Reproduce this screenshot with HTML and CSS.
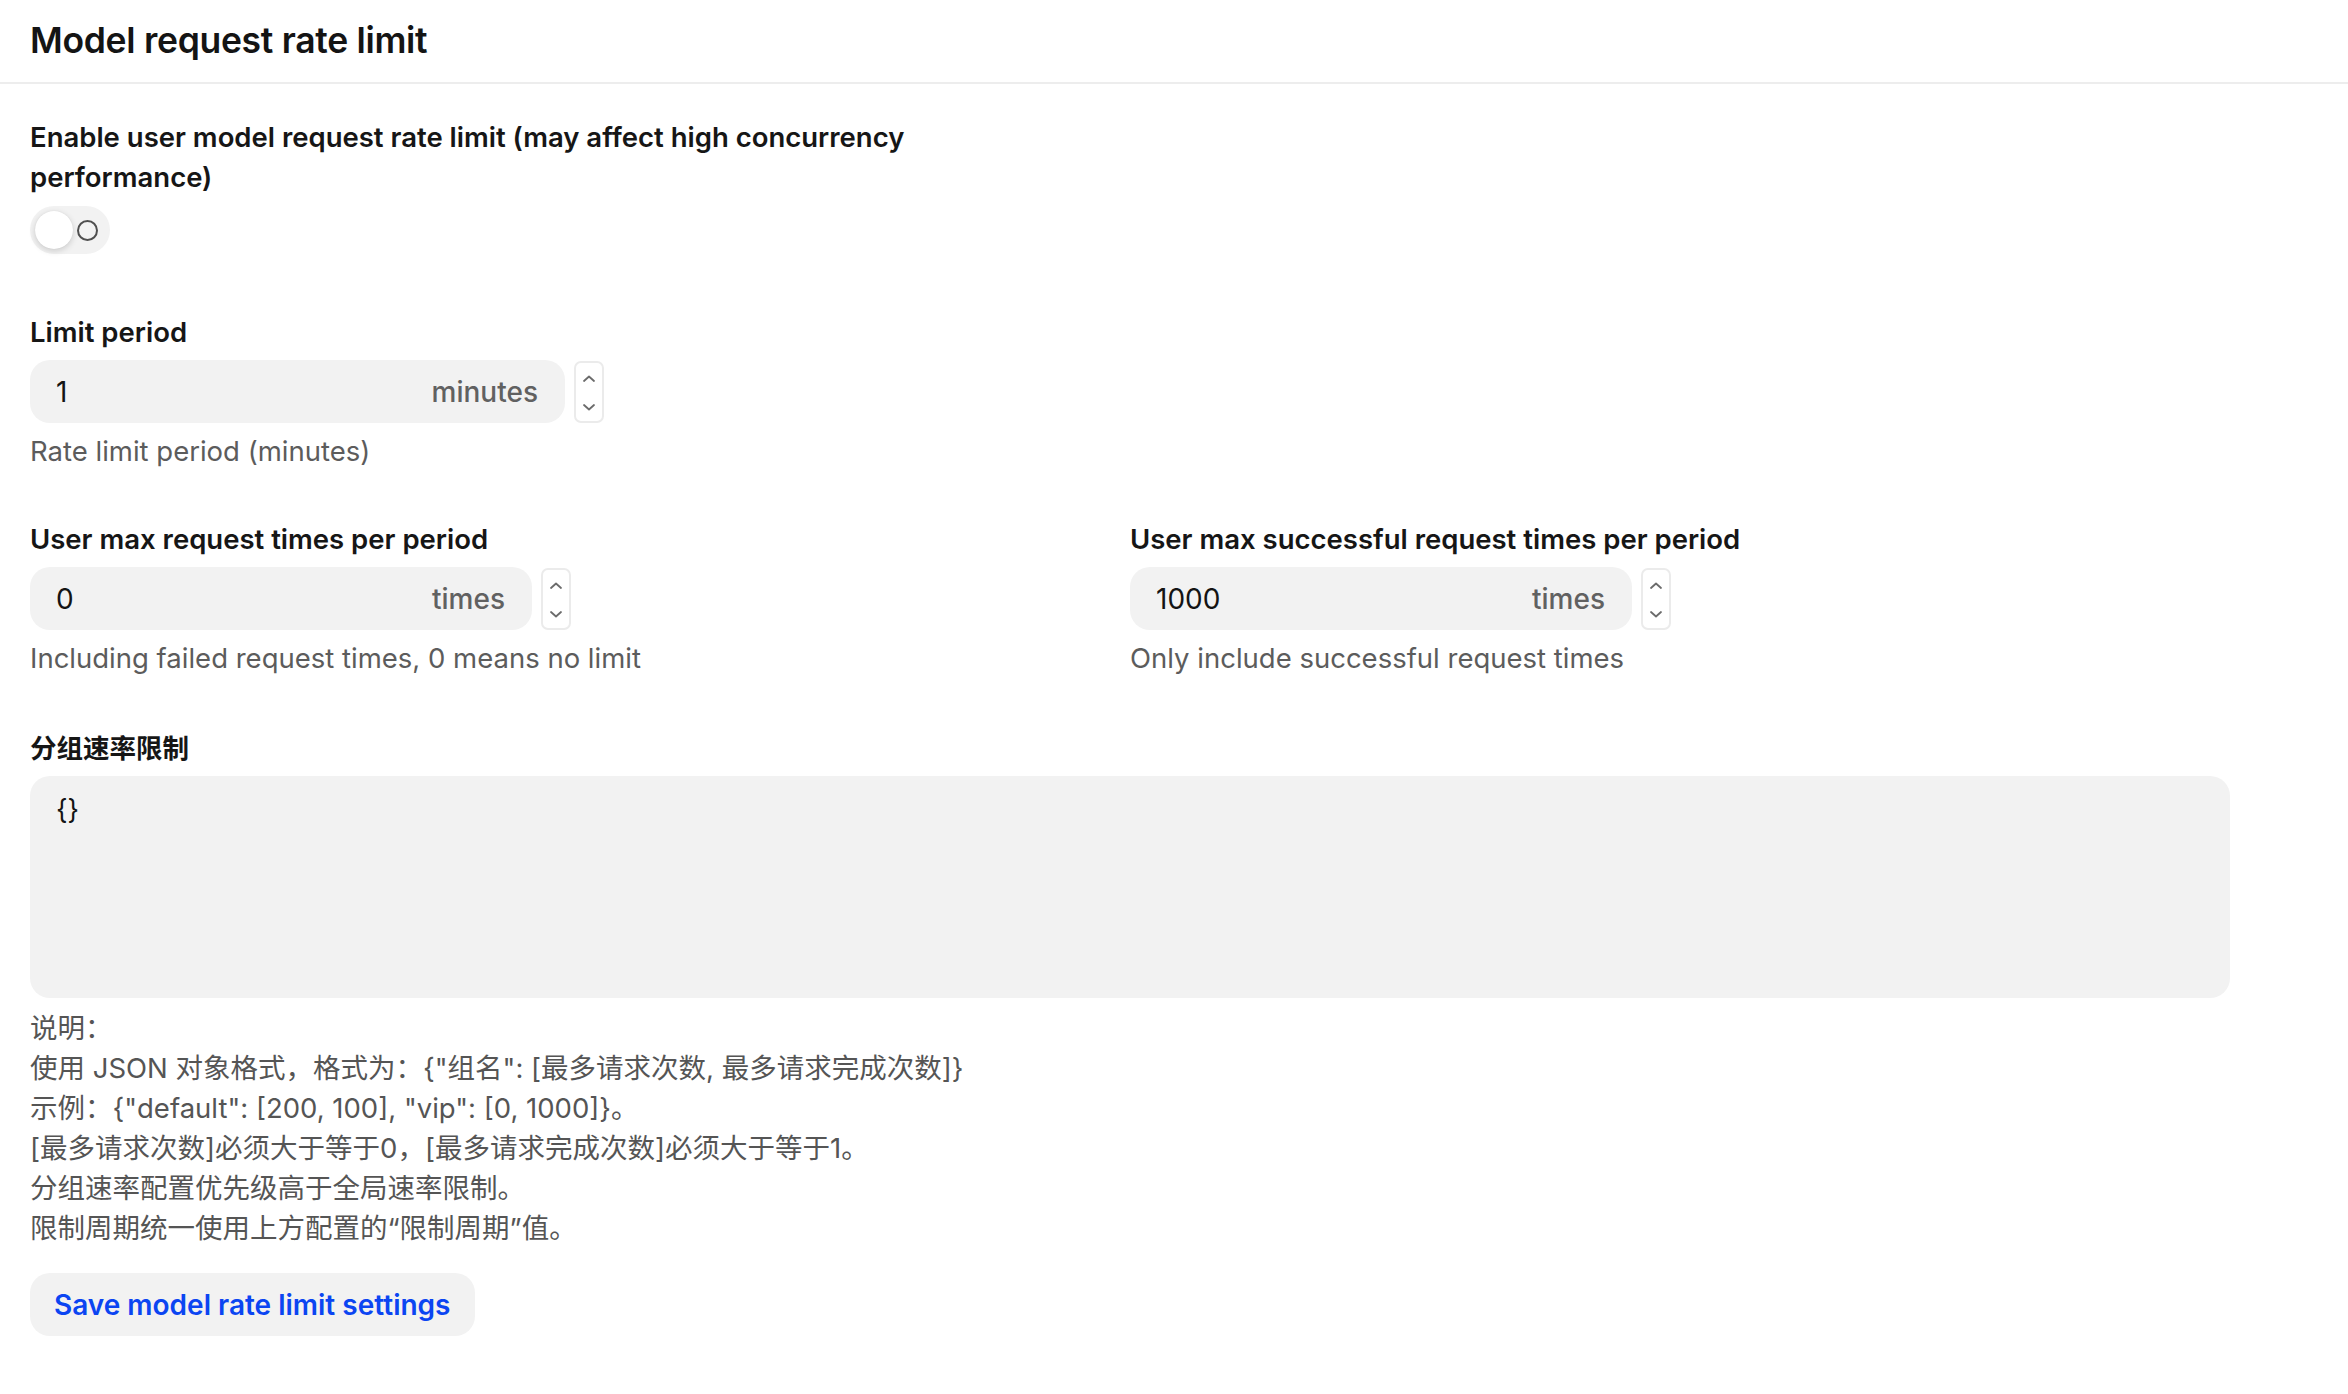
FILE: index.html
```html
<!DOCTYPE html>
<html lang="en">
<head>
<meta charset="utf-8">
<title>Model request rate limit</title>
<link rel="stylesheet" href="styles.css">
</head>
<body>
<header class="section-head">
  <h2 class="section-title">Model request rate limit</h2>
</header>
<main class="content">
  <div class="grid">
    <div class="field field-toggle">
      <label class="label">Enable user model request rate limit (may affect high concurrency performance)</label>
      <div class="switch">
        <span class="knob"></span>
        <span class="off-mark"></span>
      </div>
    </div>
    <div></div>

    <div class="field">
      <label class="label">Limit period</label>
      <div class="number-row">
        <div class="input input-wide"><span class="value">1</span><span class="suffix">minutes</span></div>
        <div class="spinner">
          <svg width="14" height="10" viewBox="0 0 14 10"><path d="M2 7 L7 2.5 L12 7" fill="none" stroke="#6b6b6b" stroke-width="1.8" stroke-linecap="round" stroke-linejoin="round"/></svg>
          <svg width="14" height="10" viewBox="0 0 14 10"><path d="M2 3 L7 7.5 L12 3" fill="none" stroke="#6b6b6b" stroke-width="1.8" stroke-linecap="round" stroke-linejoin="round"/></svg>
        </div>
      </div>
      <div class="help">Rate limit period (minutes)</div>
    </div>
    <div></div>

    <div class="field">
      <label class="label">User max request times per period</label>
      <div class="number-row">
        <div class="input"><span class="value">0</span><span class="suffix">times</span></div>
        <div class="spinner">
          <svg width="14" height="10" viewBox="0 0 14 10"><path d="M2 7 L7 2.5 L12 7" fill="none" stroke="#6b6b6b" stroke-width="1.8" stroke-linecap="round" stroke-linejoin="round"/></svg>
          <svg width="14" height="10" viewBox="0 0 14 10"><path d="M2 3 L7 7.5 L12 3" fill="none" stroke="#6b6b6b" stroke-width="1.8" stroke-linecap="round" stroke-linejoin="round"/></svg>
        </div>
      </div>
      <div class="help">Including failed request times, 0 means no limit</div>
    </div>
    <div class="field">
      <label class="label">User max successful request times per period</label>
      <div class="number-row">
        <div class="input"><span class="value">1000</span><span class="suffix">times</span></div>
        <div class="spinner">
          <svg width="14" height="10" viewBox="0 0 14 10"><path d="M2 7 L7 2.5 L12 7" fill="none" stroke="#6b6b6b" stroke-width="1.8" stroke-linecap="round" stroke-linejoin="round"/></svg>
          <svg width="14" height="10" viewBox="0 0 14 10"><path d="M2 3 L7 7.5 L12 3" fill="none" stroke="#6b6b6b" stroke-width="1.8" stroke-linecap="round" stroke-linejoin="round"/></svg>
        </div>
      </div>
      <div class="help">Only include successful request times</div>
    </div>
  </div>

  <div class="field field-json">
    <label class="label">分组速率限制</label>
    <div class="textarea">{}</div>
    <div class="notes">
      <div>说明：</div>
      <div>使用 JSON 对象格式，格式为：{"组名": [最多请求次数, 最多请求完成次数]}</div>
      <div>示例：{"default": [200, 100], "vip": [0, 1000]}。</div>
      <div>[最多请求次数]必须大于等于0，[最多请求完成次数]必须大于等于1。</div>
      <div>分组速率配置优先级高于全局速率限制。</div>
      <div>限制周期统一使用上方配置的“限制周期”值。</div>
    </div>
  </div>

  <button class="btn-save" type="button">Save model rate limit settings</button>
</main>
</body>
</html>
```

FILE: styles.css
```css
* { box-sizing: border-box; }

html, body {
  margin: 0;
  padding: 0;
  background: #ffffff;
}

body {
  font-family: "Inter", "Noto Sans CJK SC", sans-serif;
  color: #1a1a1a;
  font-size: 27px;
  line-height: 40px;
}

.section-head {
  padding: 0 0 0 30px;
  border-bottom: 2px solid #ededed;
  height: 84px;
  display: flex;
  align-items: center;
}

.section-title {
  margin: 0;
  font-size: 35.5px;
  font-weight: 600;
  letter-spacing: -0.3px;
  line-height: 40px;
  color: #141414;
}

.content {
  width: 2230px;
  padding: 33px 0 60px 30px;
}

.grid {
  display: grid;
  grid-template-columns: 1100px 1100px;
  row-gap: 48px;
}

.field {
  display: flex;
  flex-direction: column;
}

.label {
  font-size: 27.5px;
  font-weight: 600;
  line-height: 40px;
  color: #161616;
  margin-bottom: 8px;
}

.field-toggle {
  width: 1100px;
  padding-bottom: 10px;
}

.field-toggle .label {
  max-width: 960px;
  margin-bottom: 9px;
}

.switch {
  width: 80px;
  height: 48px;
  border-radius: 24px;
  background: #f2f2f2;
  display: flex;
  align-items: center;
  padding-left: 5px;
  gap: 4px;
}

.knob {
  width: 38px;
  height: 38px;
  border-radius: 50%;
  background: #ffffff;
  box-shadow: 0 2px 6px rgba(0, 0, 0, 0.16), 0 0 1px rgba(0, 0, 0, 0.1);
}

.off-mark {
  width: 21px;
  height: 21px;
  border-radius: 50%;
  border: 2px solid #4f4f4f;
}

.number-row {
  display: flex;
  align-items: center;
  gap: 9px;
}

.input {
  width: 502px;
  height: 63px;
  border-radius: 20px;
  background: #f2f2f2;
  display: flex;
  align-items: center;
  justify-content: space-between;
  padding: 0 27px 0 26px;
  font-size: 28px;
}

.input-wide {
  width: 535px;
}

.value {
  color: #141414;
}

.suffix {
  color: #616161;
  font-weight: 500;
}

.spinner {
  width: 30px;
  height: 62px;
  border: 2px solid #ebebeb;
  border-radius: 7px;
  display: flex;
  flex-direction: column;
  align-items: center;
  justify-content: space-between;
  padding: 11px 0 9px;
}

.help {
  margin-top: 8px;
  color: #5c5c5c;
  font-size: 27.5px;
  line-height: 40px;
}

.field-json {
  margin-top: 50px;
  width: 2200px;
}

.field-json .label {
  font-size: 26.5px;
}

.textarea {
  height: 222px;
  border-radius: 20px;
  background: #f2f2f2;
  padding: 14px 26px;
  font-size: 27px;
  line-height: 40px;
  color: #141414;
}

.notes {
  margin-top: 10px;
  color: #555555;
  font-size: 27.5px;
  line-height: 40px;
}

.btn-save {
  margin-top: 25px;
  height: 63px;
  padding: 0 24px;
  border: none;
  border-radius: 20px;
  background: #f2f2f2;
  color: #0b45f2;
  font-family: "Inter", sans-serif;
  font-size: 28px;
  font-weight: 600;
  cursor: pointer;
}
```
